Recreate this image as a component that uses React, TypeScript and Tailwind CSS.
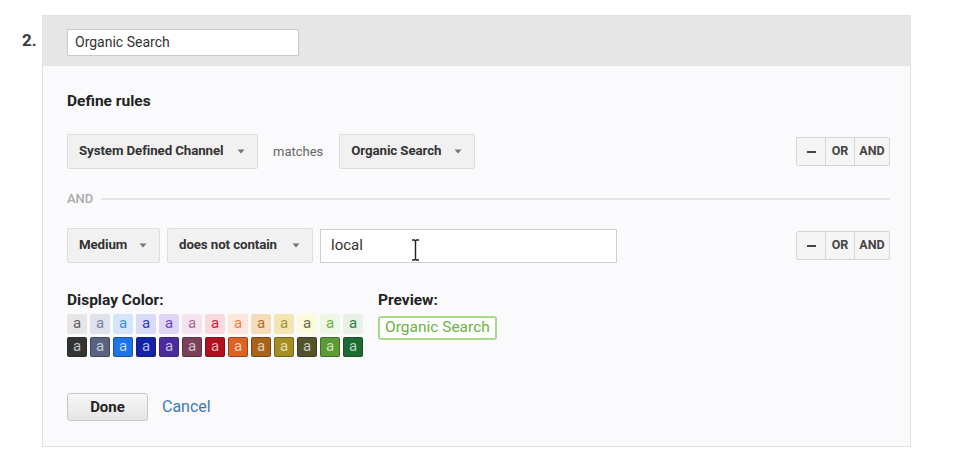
import React from 'react';

const swatches = [
  { bg: 'bg-[#e6e6e6]', fg: 'text-[#5f5f5f]' },
  { bg: 'bg-[#dde2ec]', fg: 'text-[#7784a0]' },
  { bg: 'bg-[#d4e6fb]', fg: 'text-[#3a8de6]' },
  { bg: 'bg-[#dadbf7]', fg: 'text-[#2b39c4]' },
  { bg: 'bg-[#e0d4f7]', fg: 'text-[#6b45c6]' },
  { bg: 'bg-[#f6e1ee]', fg: 'text-[#9c6f8c]' },
  { bg: 'bg-[#f9d9dd]', fg: 'text-[#d0203f]' },
  { bg: 'bg-[#fde7dc]', fg: 'text-[#f07c3c]' },
  { bg: 'bg-[#f7dcb9]', fg: 'text-[#ad7032]' },
  { bg: 'bg-[#f4e6b2]', fg: 'text-[#a68f3f]' },
  { bg: 'bg-[#fcfadd]', fg: 'text-[#6b6b45]' },
  { bg: 'bg-[#eef7e6]', fg: 'text-[#72b143]' },
  { bg: 'bg-[#e7f1e8]', fg: 'text-[#2b8242]' },
];

const darkSwatches = [
  'bg-[#333333]',
  'bg-[#59637f]',
  'bg-[#1b74e8]',
  'bg-[#1222a9]',
  'bg-[#4a2ba0]',
  'bg-[#7a4159]',
  'bg-[#b0101f]',
  'bg-[#e06222]',
  'bg-[#a8621a]',
  'bg-[#a68f22]',
  'bg-[#52522b]',
  'bg-[#5b9b32]',
  'bg-[#1b6b32]',
];

const Caret = () => (
  <svg width="8" height="5" viewBox="0 0 8 5" className="shrink-0">
    <path d="M0.5 0.5 L7.5 0.5 L4 4.5 Z" fill="#757575" />
  </svg>
);

const Select = ({ label, width }: { label: string; width: string }) => (
  <div className={`${width} h-[35px] flex items-center justify-between pl-[11px] pr-[12px] bg-[#f1f1f1] border border-[#dedede] rounded-[2px] shrink-0`}>
    <span className="text-[13.3px] font-bold text-[#333] tracking-[-0.1px] pb-[2px]">{label}</span>
    <Caret />
  </div>
);

const RuleButtons = () => (
  <div className="ml-auto flex h-[29px] border border-[#d6d6d6] rounded-[2px] bg-[#f5f5f5] text-[12.5px] font-bold text-[#444]">
    <div className="w-[29px] flex items-center justify-center border-r border-[#d6d6d6]">
      <div className="w-[9px] h-[2px] bg-[#444]" />
    </div>
    <div className="w-[29px] flex items-center justify-center border-r border-[#d6d6d6]">OR</div>
    <div className="w-[34px] flex items-center justify-center">AND</div>
  </div>
);

export default function App() {
  return (
    <div className="w-[964px] h-[464px] bg-white relative font-['Roboto','Liberation_Sans',sans-serif] text-[#333]">
      <div className="flex pt-[15px] pl-[22px]">
        <div className="w-[20px] pt-[17px] text-[17px] font-bold text-[#3a3a3a] leading-none">2.</div>
        <div className="w-[869px] h-[432px] flex flex-col border border-[#e2e2e2] bg-[#fafafc]">
          {/* Header */}
          <div className="h-[50px] bg-[#e6e6e6] pl-[24px] pt-[13px] shrink-0">
            <div className="w-[232px] h-[27px] bg-white border border-[#c9c9c9] flex items-center pl-[7px] text-[14px] text-[#333]">
              Organic Search
            </div>
          </div>

          {/* Body */}
          <div className="flex-1 pl-[24px] pr-[20px] pt-[26px]">
            <div className="text-[15.5px] font-bold text-[#222] leading-[18px]">Define rules</div>

            <div className="mt-[24px] flex items-center h-[35px]">
              <Select label="System Defined Channel" width="w-[191px]" />
              <span className="ml-[15px] mr-[16px] text-[13px] text-[#666]">matches</span>
              <Select label="Organic Search" width="w-[136px]" />
              <RuleButtons />
            </div>

            <div className="h-[59px] flex items-center gap-[8px]">
              <span className="text-[13px] font-medium text-[#aaa]">AND</span>
              <div className="flex-1 h-[2px] bg-[#e3e3e3]" />
            </div>

            <div className="flex items-center h-[35px] gap-[7px]">
              <Select label="Medium" width="w-[93px]" />
              <Select label="does not contain" width="w-[146px]" />
              <div className="w-[297px] h-[34px] bg-white border border-[#cfcfcf] flex items-center pl-[10px] text-[15px] text-[#333]">
                local
              </div>
              <RuleButtons />
            </div>

            <div className="mt-[28px] flex">
              <div className="w-[311px]">
                <div className="text-[15.5px] font-bold text-[#222] leading-[18px]">Display Color:</div>
                <div className="mt-[5px] grid grid-cols-[repeat(13,20px)] gap-x-[3px] gap-y-[3px]">
                  {swatches.map((s, i) => (
                    <div key={i} className={`h-[20px] rounded-[2px] flex items-center justify-center text-[15px] leading-none pb-[2px] ${s.bg} ${s.fg}`}>a</div>
                  ))}
                  {darkSwatches.map((bg, i) => (
                    <div key={'d' + i} className={`h-[20px] rounded-[2px] border border-[#222]/40 flex items-center justify-center text-[15px] leading-none pb-[2px] text-white/70 ${bg}`}>a</div>
                  ))}
                </div>
              </div>
              <div>
                <div className="text-[15.5px] font-bold text-[#222] leading-[18px]">Preview:</div>
                <div className="mt-[7px] inline-flex h-[24px] items-center px-[5px] border-2 border-[#a9d98a] rounded-[3px] bg-white text-[15.5px] text-[#6cb33f]">
                  Organic Search
                </div>
              </div>
            </div>

            <div className="mt-[36px] flex items-center gap-[14px]">
              <div className="w-[81px] h-[28px] flex items-center justify-center border border-[#c6c6c6] rounded-[3px] bg-gradient-to-b from-[#f8f8f8] to-[#e4e4e4] text-[15px] font-bold text-[#222]">
                Done
              </div>
              <span className="text-[16px] text-[#3d78bd]">Cancel</span>
            </div>
          </div>
        </div>
      </div>

      {/* text cursor */}
      <svg className="absolute left-[411px] top-[239px]" width="9" height="22" viewBox="0 0 9 22">
        <path d="M1 1 H3.5 L4.5 2 L5.5 1 H8 M4.5 2 V20 M1 21 H3.5 L4.5 20 L5.5 21 H8" stroke="#222" strokeWidth="1.4" fill="none" />
      </svg>
    </div>
  );
}
